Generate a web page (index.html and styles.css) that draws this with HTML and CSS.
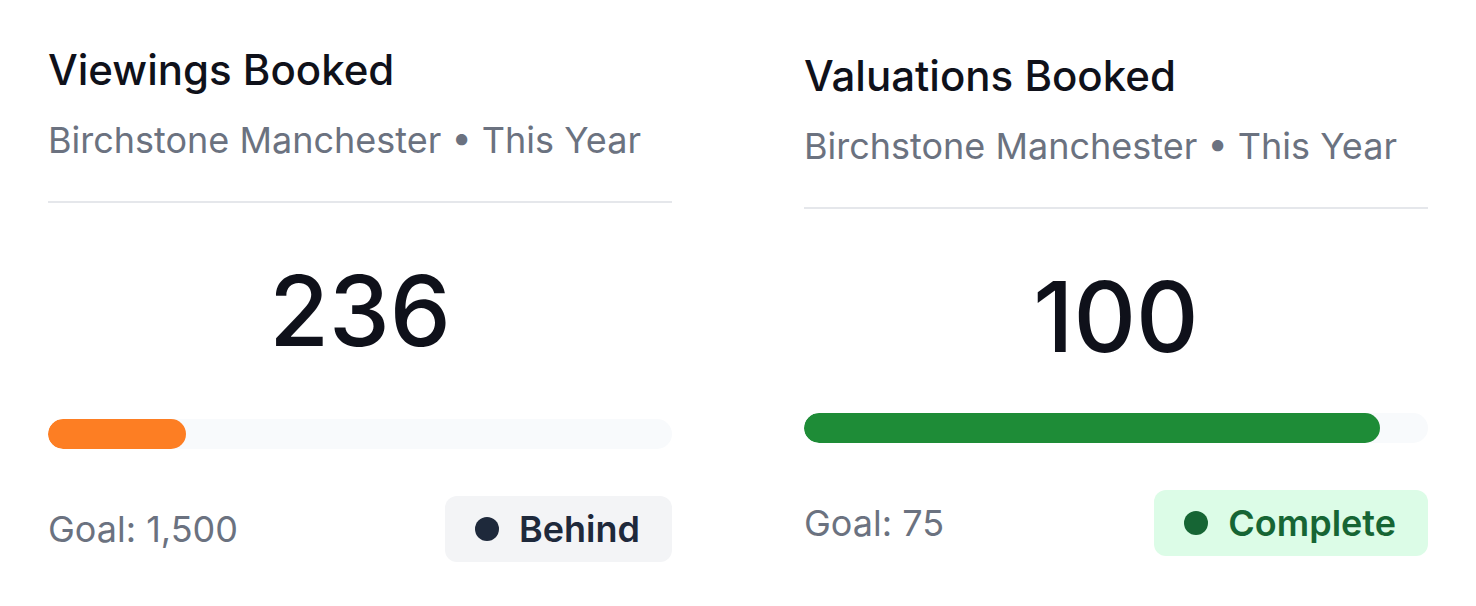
FILE: index.html
```html
<!DOCTYPE html>
<html lang="en">
<head>
<meta charset="utf-8">
<title>Booking goals</title>
<link rel="stylesheet" href="styles.css">
</head>
<body>
<main class="board">
  <section class="card">
    <h2 class="card__title">Viewings Booked</h2>
    <p class="card__subtitle">Birchstone Manchester • This Year</p>
    <hr class="card__divider">
    <div class="card__value card__value--spaced">236</div>
    <div class="progress"><div class="progress__fill progress__fill--behind" style="width:22.1%"></div></div>
    <div class="card__footer">
      <span class="card__goal">Goal: 1,500</span>
      <span class="badge badge--behind"><span class="badge__dot"></span>Behind</span>
    </div>
  </section>
  <section class="card">
    <h2 class="card__title">Valuations Booked</h2>
    <p class="card__subtitle">Birchstone Manchester • This Year</p>
    <hr class="card__divider">
    <div class="card__value">100</div>
    <div class="progress"><div class="progress__fill progress__fill--complete" style="width:92.3%"></div></div>
    <div class="card__footer">
      <span class="card__goal">Goal: 75</span>
      <span class="badge badge--complete"><span class="badge__dot"></span>Complete</span>
    </div>
  </section>
</main>
</body>
</html>
```

FILE: styles.css
```css
* { box-sizing: border-box; }

html, body {
  margin: 0;
  padding: 0;
  background: #ffffff;
  font-family: Inter, "Noto Sans", "Liberation Sans", sans-serif;
}

.board {
  display: flex;
  align-items: center;
  gap: 36px;
  height: 606px;
}

.card {
  width: 720px;
  padding: 0 48px;
  display: flex;
  flex-direction: column;
}

.card__title {
  margin: 0;
  font-size: 42px;
  line-height: 50px;
  font-weight: 500;
  color: #0f111a;
}

.card__subtitle {
  margin: 23px 0 0;
  font-size: 36px;
  line-height: 44px;
  font-weight: 400;
  color: #6b7280;
}

.card__divider {
  margin: 39px 0 0;
  border: 0;
  height: 2px;
  background: #e5e7eb;
}

.card__value {
  margin: 60px 0 48px;
  font-size: 97px;
  line-height: 96px;
  font-weight: 500;
  text-align: center;
  color: #0f111a;
}

.card__value--spaced {
  margin-bottom: 60px;
}

.progress {
  height: 30px;
  border-radius: 15px;
  background: #f8fafc;
  overflow: hidden;
}

.progress__fill {
  height: 100%;
  border-radius: 15px;
}

.progress__fill--behind { background: #fd7e23; }
.progress__fill--complete { background: #1e8c37; }

.card__footer {
  margin-top: 47px;
  display: flex;
  align-items: center;
  justify-content: space-between;
}

.card__goal {
  font-size: 36px;
  line-height: 44px;
  color: #6b7280;
}

.badge {
  height: 66px;
  display: inline-flex;
  align-items: center;
  gap: 20px;
  padding: 0 32px 0 30px;
  border-radius: 12px;
  font-size: 36px;
  font-weight: 600;
}

.badge__dot {
  width: 24px;
  height: 24px;
  border-radius: 50%;
  background: currentColor;
}

.badge--behind {
  background: #f3f4f6;
  color: #1e293b;
}

.badge--complete {
  background: #dcfce7;
  color: #166534;
}
```
